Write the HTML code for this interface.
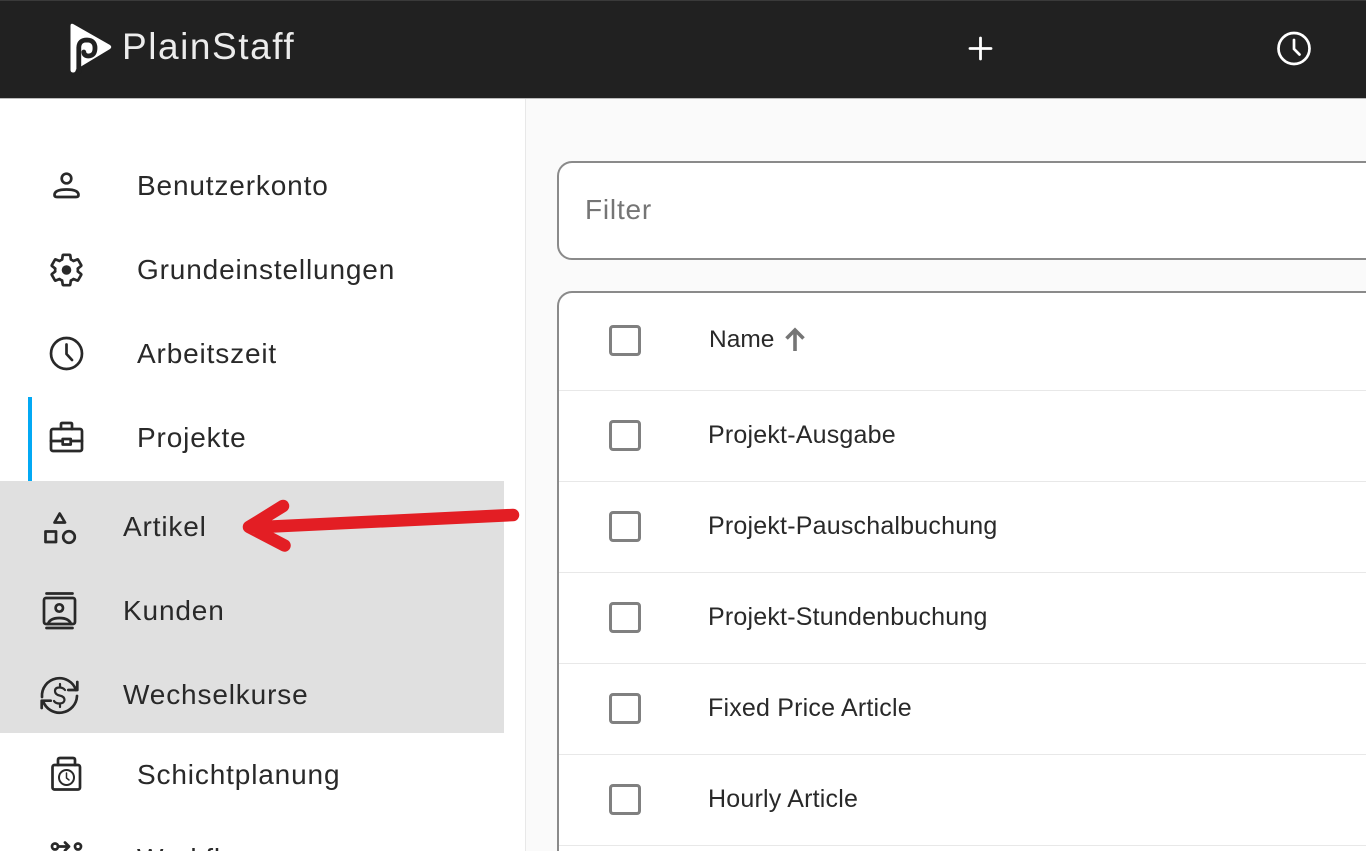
<!DOCTYPE html>
<html><head><meta charset="utf-8"><style>
html,body{margin:0;padding:0;width:1366px;height:851px;overflow:hidden;background:#fff;font-family:"Liberation Sans",sans-serif}
#w{position:relative;width:1366px;height:851px;overflow:hidden;background:#fff}
.a{position:absolute}
.t{position:absolute;white-space:nowrap;line-height:30px;height:30px;color:#292929}
.nav{font-size:28px;letter-spacing:.85px}
.row{font-size:25px;letter-spacing:.2px;left:708px}
.cb{position:absolute;left:609px;width:26px;height:25.500px;border:3px solid #808080;border-radius:4px;background:#fff}
.dv{position:absolute;left:559px;right:0;height:1px;background:#e8e8e8}
svg{position:absolute;overflow:visible}
</style></head><body><div id="w">
<div class="a" style="left:0;top:0;width:1366px;height:99px;background:#212121;border-top:1px solid #3a3a3a;box-sizing:border-box;border-bottom:1px solid #bbb"></div>
<svg style="left:0;top:0" width="120" height="98">
<path d="M70.500 26Q70.500 22.500 74 24.500L110 45Q112.500 47 110 49L76 69.500Q75.500 72.500 73.200 72.500Q70.500 72.500 70.500 70Z" fill="#fff"/>
<path d="M78.800 72V47.500Q79 40 87 40Q95 40.300 95 48Q95 55.800 88.500 56Q84 55.800 83.800 52" fill="none" stroke="#212121" stroke-width="4.800" stroke-linecap="round"/>
</svg>
<div class="t" style="left:122px;top:25px;height:44px;line-height:44px;font-size:37px;letter-spacing:1.550px;color:#ececec">PlainStaff</div>
<svg style="left:960px;top:28px" width="40" height="40"><path d="M20.500 10V31M10 20.500H31" stroke="#fff" stroke-width="2.800" stroke-linecap="round"/></svg>
<svg style="left:1270px;top:25px" width="48" height="48"><circle cx="24" cy="23.500" r="15.500" fill="none" stroke="#fff" stroke-width="2.700"/><path d="M24 15V24L29.500 29.500" fill="none" stroke="#fff" stroke-width="2.700" stroke-linecap="round"/></svg>

<div class="a" style="left:525px;top:99px;width:841px;height:752px;background:#fafafa;border-left:1px solid #e8e8e8"></div>
<div class="a" style="left:0;top:481px;width:504px;height:252px;background:#e0e0e0"></div>
<div class="a" style="left:28px;top:397px;width:4px;height:84px;background:#03a9f4"></div>

<svg style="left:0;top:150px" width="120" height="701" fill="none" stroke="#292929" stroke-width="2.700" stroke-linecap="round" stroke-linejoin="round">
<circle cx="66.500" cy="28.500" r="4.800"/>
<path d="M54.500 45Q54.500 39.500 66.500 39.500Q78.500 39.500 78.500 45Q78.500 47 76 47H57Q54.500 47 54.500 45Z"/>
<path transform="translate(66.500,120) scale(1.580) translate(-12,-12)" stroke-width="1.700" d="M19.140 12.940c.04-.3.06-.61.06-.94 0-.32-.02-.64-.07-.94l2.030-1.580c.18-.14.23-.41.12-.61l-1.920-3.320c-.12-.22-.37-.29-.59-.22l-2.390.96c-.5-.38-1.030-.7-1.620-.94l-.36-2.540c-.04-.24-.24-.41-.48-.41h-3.840c-.24 0-.43.17-.47.41l-.36 2.540c-.59.24-1.130.57-1.620.94l-2.390-.96c-.22-.08-.47 0-.59.22L2.740 8.870c-.12.21-.08.47.12.61l2.030 1.580c-.05.3-.09.63-.09.94s.02.64.07.94l-2.030 1.580c-.18.14-.23.41-.12.61l1.920 3.320c.12.22.37.29.59.22l2.390-.96c.5.38 1.030.7 1.620.94l.36 2.540c.05.24.24.41.48.41h3.840c.24 0 .44-.17.47-.41l.36-2.540c.59-.24 1.130-.56 1.620-.94l2.390.96c.22.08.47 0 .59-.22l1.920-3.320c.12-.22.07-.47-.12-.61l-2.010-1.580z"/>
<circle cx="66.500" cy="120" r="4.800" fill="#292929" stroke="none"/>
<circle cx="66.500" cy="203.500" r="15.500"/>
<path d="M66.500 194.500V204L72 210"/>
<rect x="51" y="279" width="31" height="22" rx="2"/>
<path d="M61 279V274Q61 273 62.500 273H70.500Q72 273 72 274V279M51 291H62.500M71 291H82"/>
<rect x="62.700" y="289" width="8" height="5.500"/>
<path d="M59.700 363.500L65 372.500H54.500Z"/>
<rect x="45.500" y="381.500" width="10.500" height="10.500"/>
<circle cx="69" cy="387" r="5.800"/>
<rect x="44" y="448" width="31" height="26" rx="2"/>
<path d="M46.500 443.500H72.500M46.500 478H72.500"/>
<circle cx="59.300" cy="458" r="3.700"/>
<path d="M48 474Q50 468 59.300 468Q69 468 71 474"/>
<path d="M42 547A17.500 17.500 0 0 1 76 540M77 546A17.500 17.500 0 0 1 43 551"/>
<path d="M77.300 532V540H68.300M41.700 558V550.700H50.700"/>
<path d="M65 540Q63 537.500 59.500 537.500Q55 537.500 55 541Q55 544.500 59.500 545.500Q64.500 546.500 64.500 550Q64 553.500 59.500 553.500Q55.500 553.500 54 551M60 534V537.500M60 554V557" stroke-width="2.200"/>
<rect x="52.500" y="615" width="27.500" height="24.500" rx="2"/>
<path d="M58 615V610Q58 608 60 608H73Q75 608 75 610V615"/>
<circle cx="66.500" cy="627.500" r="7.500" stroke-width="2"/>
<path d="M66.500 623V628L69 630" stroke-width="1.500"/>
<circle cx="55" cy="696.500" r="3"/>
<circle cx="78" cy="696.500" r="3"/>
<path d="M58 696.500H69M65 692.500L69 696.500L65 700.500"/>
</svg>

<div class="t nav" style="left:137px;top:171px">Benutzerkonto</div>
<div class="t nav" style="left:137px;top:255px">Grundeinstellungen</div>
<div class="t nav" style="left:137px;top:339px">Arbeitszeit</div>
<div class="t nav" style="left:137px;top:423px">Projekte</div>
<div class="t nav" style="left:123px;top:512px">Artikel</div>
<div class="t nav" style="left:123px;top:596px">Kunden</div>
<div class="t nav" style="left:123px;top:680px">Wechselkurse</div>
<div class="t nav" style="left:137px;top:760px">Schichtplanung</div>
<div class="t nav" style="left:137px;top:844px">Workflow</div>

<div class="a" style="left:557px;top:161px;width:830px;height:99px;box-sizing:border-box;background:#fff;border:2px solid #8a8a8a;border-radius:15px"></div>
<div class="t" style="left:585px;top:195px;font-size:28px;letter-spacing:.8px;color:#757575">Filter</div>

<div class="a" style="left:557px;top:291px;width:830px;height:600px;box-sizing:border-box;background:#fff;border:2px solid #8a8a8a;border-radius:15px"></div>
<div class="dv" style="top:390px"></div>
<div class="dv" style="top:481px"></div>
<div class="dv" style="top:572px"></div>
<div class="dv" style="top:663px"></div>
<div class="dv" style="top:754px"></div>
<div class="dv" style="top:845px"></div>

<div class="cb" style="top:324.500px"></div>
<div class="cb" style="top:419.500px"></div>
<div class="cb" style="top:510.500px"></div>
<div class="cb" style="top:601.500px"></div>
<div class="cb" style="top:692.500px"></div>
<div class="cb" style="top:783.500px"></div>

<div class="t" style="left:709px;top:325px;font-size:24.500px;letter-spacing:0">Name</div>
<svg style="left:780px;top:325px" width="30" height="30"><path d="M15 26V5M6.500 13.500L15 5L23.500 13.500" fill="none" stroke="#757575" stroke-width="3.600"/></svg>
<div class="t row" style="top:420px">Projekt-Ausgabe</div>
<div class="t row" style="top:511px">Projekt-Pauschalbuchung</div>
<div class="t row" style="top:602px">Projekt-Stundenbuchung</div>
<div class="t row" style="top:693px">Fixed Price Article</div>
<div class="t row" style="top:784px">Hourly Article</div>

<svg style="left:0;top:0" width="1366" height="851"><path d="M513 515L252 527.500M283 506L249 527L284.500 545.500" fill="none" stroke="#e31e24" stroke-width="12.500" stroke-linecap="round" stroke-linejoin="round"/></svg>
</div></body></html>
